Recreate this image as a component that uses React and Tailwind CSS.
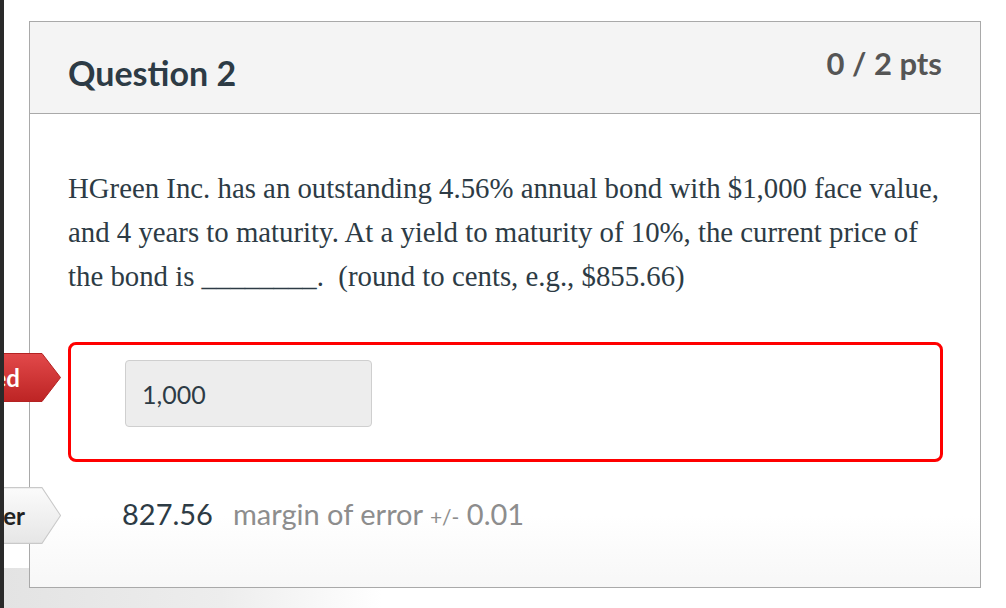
const lato = { fontFamily: 'Lato, "Liberation Sans", sans-serif' };

function Tag({ tone, children }) {
  const red = tone === 'red';
  return (
    <div className="absolute left-[-91px] flex h-full w-[122px] items-center justify-end">
      <svg className="absolute inset-0" width="122" height="100%" viewBox="0 0 122 50" preserveAspectRatio="none">
        <defs>
          <linearGradient id={`g-${tone}`} x1="0" y1="0" x2="0" y2="1">
            <stop offset="0" stopColor={red ? '#e2494a' : '#fbfbfb'} />
            <stop offset="1" stopColor={red ? '#bd2424' : '#e6e6e6'} />
          </linearGradient>
        </defs>
        <polygon
          points="0.5,0.5 103,0.5 121.5,25 103,49.5 0.5,49.5"
          fill={`url(#g-${tone})`}
          stroke={red ? '#b32020' : '#c9c9c9'}
          strokeWidth="1"
        />
      </svg>
      <span
        className={`relative shrink-0 whitespace-nowrap text-[24px] font-bold ${
          red ? 'mr-[41px] text-white' : 'mr-[36px] text-[#222]'
        }`}
        style={lato}
      >
        {children}
      </span>
    </div>
  );
}

export default function App() {
  return (
    <div className="relative h-[608px] w-[1006px] overflow-hidden bg-white">
      <div className="absolute inset-x-0 bottom-0 h-[40px] bg-[linear-gradient(to_right,#e3e3e3,#ededed_22%,#ffffff_38%)]" />
      <div className="absolute left-0 top-0 z-20 h-full w-[4px] bg-[#2a2a2a]" />

      <div className="relative pl-[29px] pt-[21px]">
        <div className="flex h-[567px] w-[952px] flex-col border border-[#a9a9a9] bg-white">
          <div className="flex h-[92px] items-start justify-between border-b border-[#a9a9a9] bg-[#f4f4f4] px-[38px]">
            <h2 className="mt-[29px] text-[34px] font-bold leading-[44px] text-[#2d3b45]" style={lato}>
              Question 2
            </h2>
            <div className="mt-[21px] text-[31px] font-bold leading-[40px] text-[#555]" style={lato}>
              0 / 2 pts
            </div>
          </div>

          <div className="flex-1 bg-[linear-gradient(to_bottom,#fff_85%,#f7f7f7)] px-[38px] pt-[52px]">
            <p
              className="w-[890px] text-[28.8px] leading-[44px] text-[#2d3b45]"
              style={{ fontFamily: '"Liberation Serif", "Times New Roman", serif' }}
            >
              HGreen Inc. has an outstanding 4.56% annual bond with $1,000 face value, and 4 years to maturity. At a
              yield to maturity of 10%, the current price of the bond is ________.&nbsp; (round to cents, e.g.,
              $855.66)
            </p>

            <div className="relative mt-[44px]">
              <div className="absolute left-[-38px] top-[11px] h-[49px]">
                <Tag tone="red">You Answered</Tag>
              </div>
              <div className="h-[120px] w-[875px] rounded-[8px] border-[3px] border-[#ff0000] pl-[54px] pt-[15px]">
                <div
                  className="flex h-[67px] w-[247px] items-center rounded-[4px] border border-[#cfcfcf] bg-[#ededed] px-[16px] pt-[3px] text-[25px] text-[#2d3b45]"
                  style={lato}
                >
                  1,000
                </div>
              </div>
            </div>

            <div className="relative mt-[25px] flex h-[57px] items-center">
              <div className="absolute left-[-38px] top-0 h-[57px]">
                <Tag tone="gray">Correct Answer</Tag>
              </div>
              <div className="-mt-[4px] ml-[54px] flex items-baseline gap-[20px]" style={lato}>
                <span className="text-[29px] text-[#2d3b45]">827.56</span>
                <span className="text-[29px] text-[#8d8d8d]">
                  margin of error <span className="text-[21px]">+/-</span> 0.01
                </span>
              </div>
            </div>
          </div>
        </div>
      </div>
    </div>
  );
}
